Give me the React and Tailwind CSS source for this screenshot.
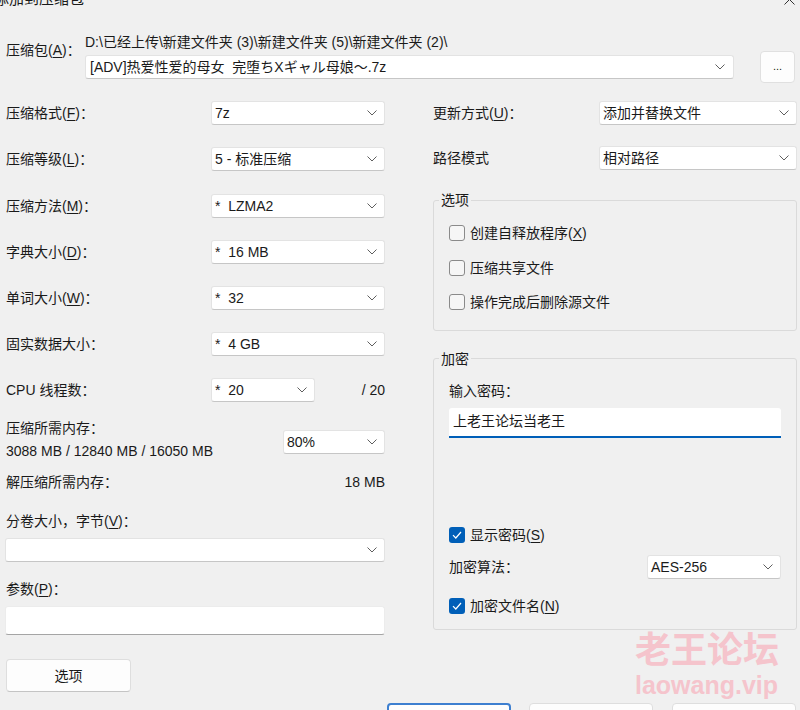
import React from "react";

const Chevron = () => (
    <svg width="10" height="6" viewBox="0 0 10 6" className="shrink-0">
        <path d="M0.5 0.5 L5 5 L9.5 0.5" fill="none" stroke="#5f5f5f" strokeWidth="1" />
    </svg>
);

const Combo = ({ value = "", className = "" }) => (
    <div
        className={`flex h-[24px] items-center justify-between rounded-[3px] border border-[#e3e3e3] border-b-[#c6c6c6] bg-white pl-[3px] pr-[7px] ${className}`}
    >
        <span className="whitespace-pre">{value}</span>
        <Chevron />
    </div>
);

// label like 压缩格式(F)：
const Label = ({ text, k, colon = true }) => (
    <span className="whitespace-pre">
        {text}
        {k && (
            <>
                (<span className="underline underline-offset-2">{k}</span>)
            </>
        )}
        {colon ? "：" : ""}
    </span>
);

const CheckBox = ({ checked, children }) => (
    <div className="flex h-[20px] items-center gap-[5px]">
        {checked ? (
            <div className="flex h-[16px] w-[16px] items-center justify-center rounded-[3px] bg-[#005fb8]">
                <svg width="10" height="8" viewBox="0 0 10 8">
                    <path d="M1 4.2 L3.8 7 L9 1" fill="none" stroke="white" strokeWidth="1.2" />
                </svg>
            </div>
        ) : (
            <div className="h-[16px] w-[16px] rounded-[3px] border border-[#8a8a8a] bg-[#f6f6f6]" />
        )}
        {children}
    </div>
);

const Row = ({ children, className = "" }) => (
    <div className={`flex h-[24px] items-center justify-between ${className}`}>{children}</div>
);

const App = () => {
    return (
        <div className="relative h-[710px] w-[800px] overflow-hidden bg-[#f0f0f0] font-['Liberation_Sans','Noto_Sans_CJK_SC',sans-serif] text-[14px] leading-[18px] text-[#1a1a1a]">
            {/* Title bar (cut off at the top) */}
            <div className="flex h-[33px] items-start">
                <span className="-ml-[6px] -mt-[11px] text-[15px] leading-[20px]">添加到压缩包</span>
                <svg width="11" height="11" viewBox="0 0 11 11" className="ml-auto mr-[5px] -mt-[6px]">
                    <path d="M0.5 0.5 L10.5 10.5 M10.5 0.5 L0.5 10.5" stroke="#333" strokeWidth="1" />
                </svg>
            </div>

            {/* Archive row */}
            <div className="flex items-start">
                <div className="w-[85px] pl-[6px] pt-[8px]">
                    <Label text="压缩包" k="A" />
                </div>
                <div className="w-[649px]">
                    <div className="h-[18px] whitespace-pre">
                        {"D:\\已经上传\\新建文件夹 (3)\\新建文件夹 (5)\\新建文件夹 (2)\\"}
                    </div>
                    <Combo
                        className="mt-[4px] pl-[4px] pr-[8px] border-[#c9c9c9] border-b-[#9a9a9a]"
                        value="[ADV]热爱性爱的母女  完堕ちXギャル母娘～.7z"
                    />
                </div>
                <button className="ml-[26px] mt-[18px] flex h-[32px] w-[35px] items-end justify-center rounded-[4px] border border-[#e0e0e0] bg-[#fdfdfd] pb-[10px] text-[11px] leading-[11px]">
                    ...
                </button>
            </div>

            {/* Main two columns */}
            <div className="mt-[18px] flex items-start">
                {/* Left column */}
                <div className="w-[385px] pl-[5px]">
                    <Row className="pl-[1px]">
                        <Label text="压缩格式" k="F" />
                        <Combo className="w-[174px]" value="7z" />
                    </Row>
                    <Row className="mt-[22px] pl-[1px]">
                        <Label text="压缩等级" k="L" />
                        <Combo className="w-[174px]" value="5 - 标准压缩" />
                    </Row>
                    <Row className="mt-[23px] pl-[1px]">
                        <Label text="压缩方法" k="M" />
                        <Combo className="w-[174px]" value="*  LZMA2" />
                    </Row>
                    <Row className="mt-[22px] pl-[1px]">
                        <Label text="字典大小" k="D" />
                        <Combo className="w-[174px]" value="*  16 MB" />
                    </Row>
                    <Row className="mt-[22px] pl-[1px]">
                        <Label text="单词大小" k="W" />
                        <Combo className="w-[174px]" value="*  32" />
                    </Row>
                    <Row className="mt-[22px] pl-[1px]">
                        <Label text="固实数据大小" />
                        <Combo className="w-[174px]" value="*  4 GB" />
                    </Row>
                    <Row className="mt-[22px] pl-[1px]">
                        <Label text="CPU 线程数" />
                        <div className="flex w-[174px] items-center justify-between">
                            <Combo className="w-[104px]" value="*  20" />
                            <span>/ 20</span>
                        </div>
                    </Row>

                    <div className="mt-[17px] flex items-start justify-between pl-[1px]">
                        <div>
                            <div>
                                <Label text="压缩所需内存" />
                            </div>
                            <div className="mt-[5px]">3088 MB / 12840 MB / 16050 MB</div>
                        </div>
                        <Combo className="mt-[11px] w-[102px]" value="80%" />
                    </div>

                    <div className="mt-[13px] flex justify-between pl-[1px]">
                        <Label text="解压缩所需内存" />
                        <span>18 MB</span>
                    </div>

                    <div className="mt-[21px] pl-[1px]">
                        <Label text="分卷大小，字节" k="V" />
                    </div>
                    <Combo className="mt-[8px] w-[380px] border-[#c9c9c9] border-b-[#9a9a9a]" />

                    <div className="mt-[18px] pl-[1px]">
                        <Label text="参数" k="P" />
                    </div>
                    <div className="mt-[8px] h-[29px] w-[380px] rounded-[3px] border border-[#ececec] border-b-[#a5a5a5] bg-white" />

                    <button className="ml-[1px] mt-[24px] h-[33px] w-[125px] rounded-[4px] border border-[#dedede] border-b-[#c4c4c4] bg-[#fdfdfd]">
                        选项
                    </button>
                </div>

                {/* Right column */}
                <div className="ml-[48px] w-[364px]">
                    <Row>
                        <Label text="更新方式" k="U" />
                        <Combo className="w-[198px]" value="添加并替换文件" />
                    </Row>
                    <Row className="mt-[21px]">
                        <Label text="路径模式" colon={false} />
                        <Combo className="w-[198px]" value="相对路径" />
                    </Row>

                    {/* 选项 group */}
                    <div className="mt-[30px] h-[131px] rounded-[3px] border border-[#dadada]">
                        <div className="ml-[5px] -mt-[10px] w-fit bg-[#f0f0f0] px-[2px]">选项</div>
                        <div className="pl-[15px]">
                            <div className="mt-[14px]">
                                <CheckBox>
                                    <Label text="创建自释放程序" k="X" colon={false} />
                                </CheckBox>
                            </div>
                            <div className="mt-[15px]">
                                <CheckBox>压缩共享文件</CheckBox>
                            </div>
                            <div className="mt-[14px]">
                                <CheckBox>操作完成后删除源文件</CheckBox>
                            </div>
                        </div>
                    </div>

                    {/* 加密 group */}
                    <div className="mt-[27px] h-[272px] rounded-[3px] border border-[#dadada]">
                        <div className="ml-[5px] -mt-[9px] w-fit bg-[#f0f0f0] px-[2px]">加密</div>
                        <div className="pl-[15px] pr-[15px]">
                            <div className="mt-[14px]">
                                <Label text="输入密码" />
                            </div>
                            <div className="mt-[8px] flex h-[30px] items-center rounded-t-[3px] border-b-2 border-[#005fb8] bg-white pl-[4px] pb-[2px]">
                                上老王论坛当老王
                            </div>
                            <div className="mt-[87px]">
                                <CheckBox checked>
                                    <Label text="显示密码" k="S" colon={false} />
                                </CheckBox>
                            </div>
                            <Row className="mt-[10px]">
                                <Label text="加密算法" />
                                <Combo className="w-[134px]" value="AES-256" />
                            </Row>
                            <div className="mt-[17px]">
                                <CheckBox checked>
                                    <Label text="加密文件名" k="N" colon={false} />
                                </CheckBox>
                            </div>
                        </div>
                    </div>
                </div>
            </div>

            {/* Bottom buttons (cut off by the window edge) */}
            <div className="ml-[387px] mt-[11px] flex gap-[18px]">
                <button className="h-[40px] w-[124px] rounded-[4px] border-2 border-[#3d7fd0] bg-[#fdfdfd] pt-[12px]">确定</button>
                <button className="h-[40px] w-[124px] rounded-[4px] border border-[#dedede] bg-[#fdfdfd] pt-[12px]">取消</button>
                <button className="ml-[1px] h-[40px] w-[124px] rounded-[4px] border border-[#dedede] bg-[#fdfdfd] pt-[12px]">帮助</button>
            </div>

            {/* Watermark */}
            <div className="pointer-events-none absolute left-[635px] top-[633px] font-bold text-[#f5c4cc]">
                <div className="text-[36px] leading-[36px]">老王论坛</div>
                <div className="mt-[3px] text-[25px] leading-[26px]">laowang.vip</div>
            </div>
        </div>
    );
};

export default App;
